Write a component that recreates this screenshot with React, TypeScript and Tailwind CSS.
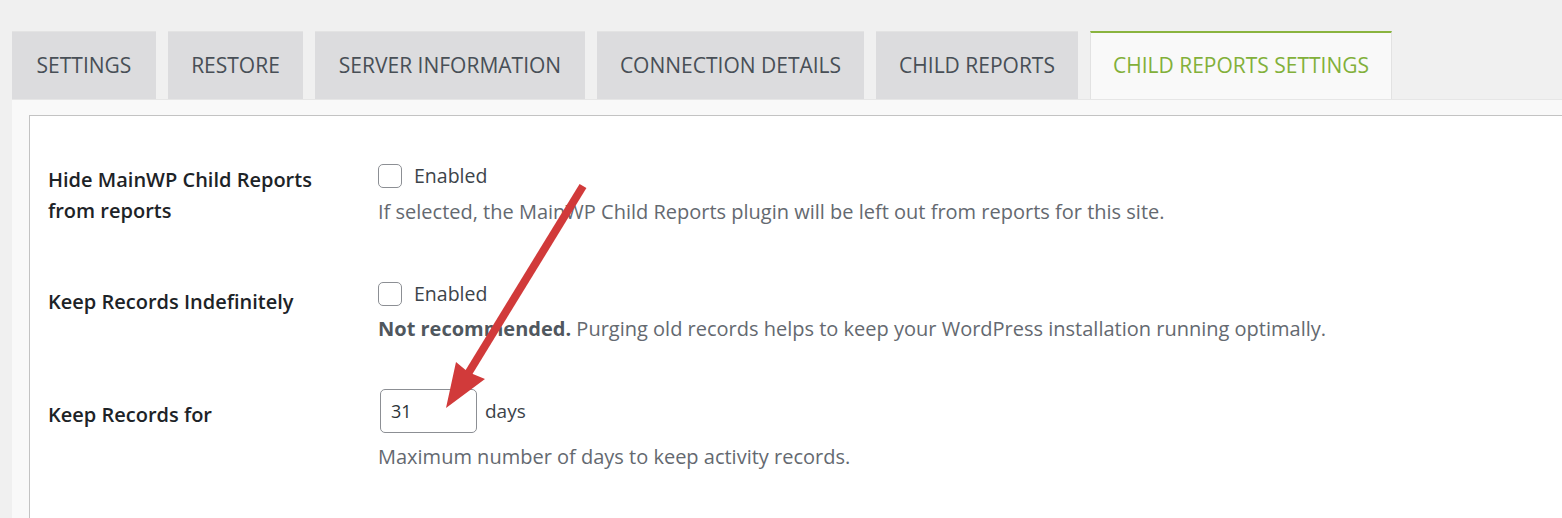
import React from 'react';

const tabs = [
  { name: 'SETTINGS', w: 'w-[144px]' },
  { name: 'RESTORE', w: 'w-[135px]' },
  { name: 'SERVER INFORMATION', w: 'w-[270px]' },
  { name: 'CONNECTION DETAILS', w: 'w-[267px]' },
  { name: 'CHILD REPORTS', w: 'w-[202px]' },
];

const Checkbox = () => (
  <span className="inline-block w-[24px] h-[24px] rounded-[5px] border border-[#8c8f94] bg-white" />
);

const App = () => {
  return (
    <div className="relative h-[518px] overflow-hidden bg-[#f0f0f0] pt-[31px] pl-[12px] font-['Open_Sans',sans-serif]">
      {/* tab bar */}
      <div className="flex gap-3 h-[68px]">
        {tabs.map((t) => (
          <div
            key={t.name}
            className={`${t.w} flex items-center justify-center bg-[#dcdcde] border-t border-[#e3e3e3] text-[21px] text-[#484f56]`}
          >
            {t.name}
          </div>
        ))}
        <div className="w-[302px] flex items-center justify-center bg-[#f9f9f9] border-t-2 border-x border-t-[#8ab43f] border-x-[#e2e2e2] text-[21px] text-[#82b03a]">
          CHILD REPORTS SETTINGS
        </div>
      </div>

      {/* panel */}
      <div className="bg-[#f9f9f9] border-t border-[#e6e6e6] pl-[17px] pt-[15px] h-[420px]">
        <div className="bg-white border border-r-0 border-[#c3c3c3] h-full pl-[18px] pt-[48px]">
          {/* row 1 */}
          <div className="flex">
            <div className="w-[330px] text-[20px] leading-[31px] font-semibold text-[#1d2327]">
              Hide MainWP Child Reports
              <br />
              from reports
            </div>
            <div>
              <label className="flex items-center gap-3 h-[24px] text-[19.5px] text-[#3c434a]">
                <Checkbox />
                Enabled
              </label>
              <p className="mt-[10px] text-[20px] leading-[28px] text-[#646970]">
                If selected, the MainWP Child Reports plugin will be left out from reports for this site.
              </p>
            </div>
          </div>

          {/* row 2 */}
          <div className="flex mt-[56px]">
            <div className="w-[330px] mt-[4px] text-[20px] leading-[31px] font-semibold text-[#1d2327]">
              Keep Records Indefinitely
            </div>
            <div>
              <label className="flex items-center gap-3 h-[24px] text-[19.5px] text-[#3c434a]">
                <Checkbox />
                Enabled
              </label>
              <p className="mt-[9px] text-[20px] leading-[28px] text-[#646970]">
                <strong className="font-bold text-[#50575e]">Not recommended.</strong> Purging old records helps to keep your WordPress installation running optimally.
              </p>
            </div>
          </div>

          {/* row 3 */}
          <div className="flex mt-[46px]">
            <div className="w-[330px] mt-[10px] text-[20px] leading-[31px] font-semibold text-[#1d2327]">
              Keep Records for
            </div>
            <div className="pl-[2px]">
              <div className="flex items-center gap-2 text-[19px] text-[#3c434a]">
                <div className="w-[97px] h-[44px] flex items-center pl-[10px] rounded-[5px] border border-[#8c8f94] bg-white text-[18px] text-[#2c3338]">
                  31
                </div>
                days
              </div>
              <p className="mt-[10px] -ml-[2px] text-[20px] leading-[28px] text-[#646970]">
                Maximum number of days to keep activity records.
              </p>
            </div>
          </div>
        </div>
      </div>

      {/* annotation arrow */}
      <svg className="absolute left-0 top-0 pointer-events-none" width="1562" height="518" viewBox="0 0 1562 518">
        <line x1="583" y1="186" x2="466" y2="377" stroke="#d13a3a" strokeWidth="8" />
        <polygon points="446,408 456,362 468,372 485,379" fill="#d13a3a" />
      </svg>
    </div>
  );
};

export default App;
